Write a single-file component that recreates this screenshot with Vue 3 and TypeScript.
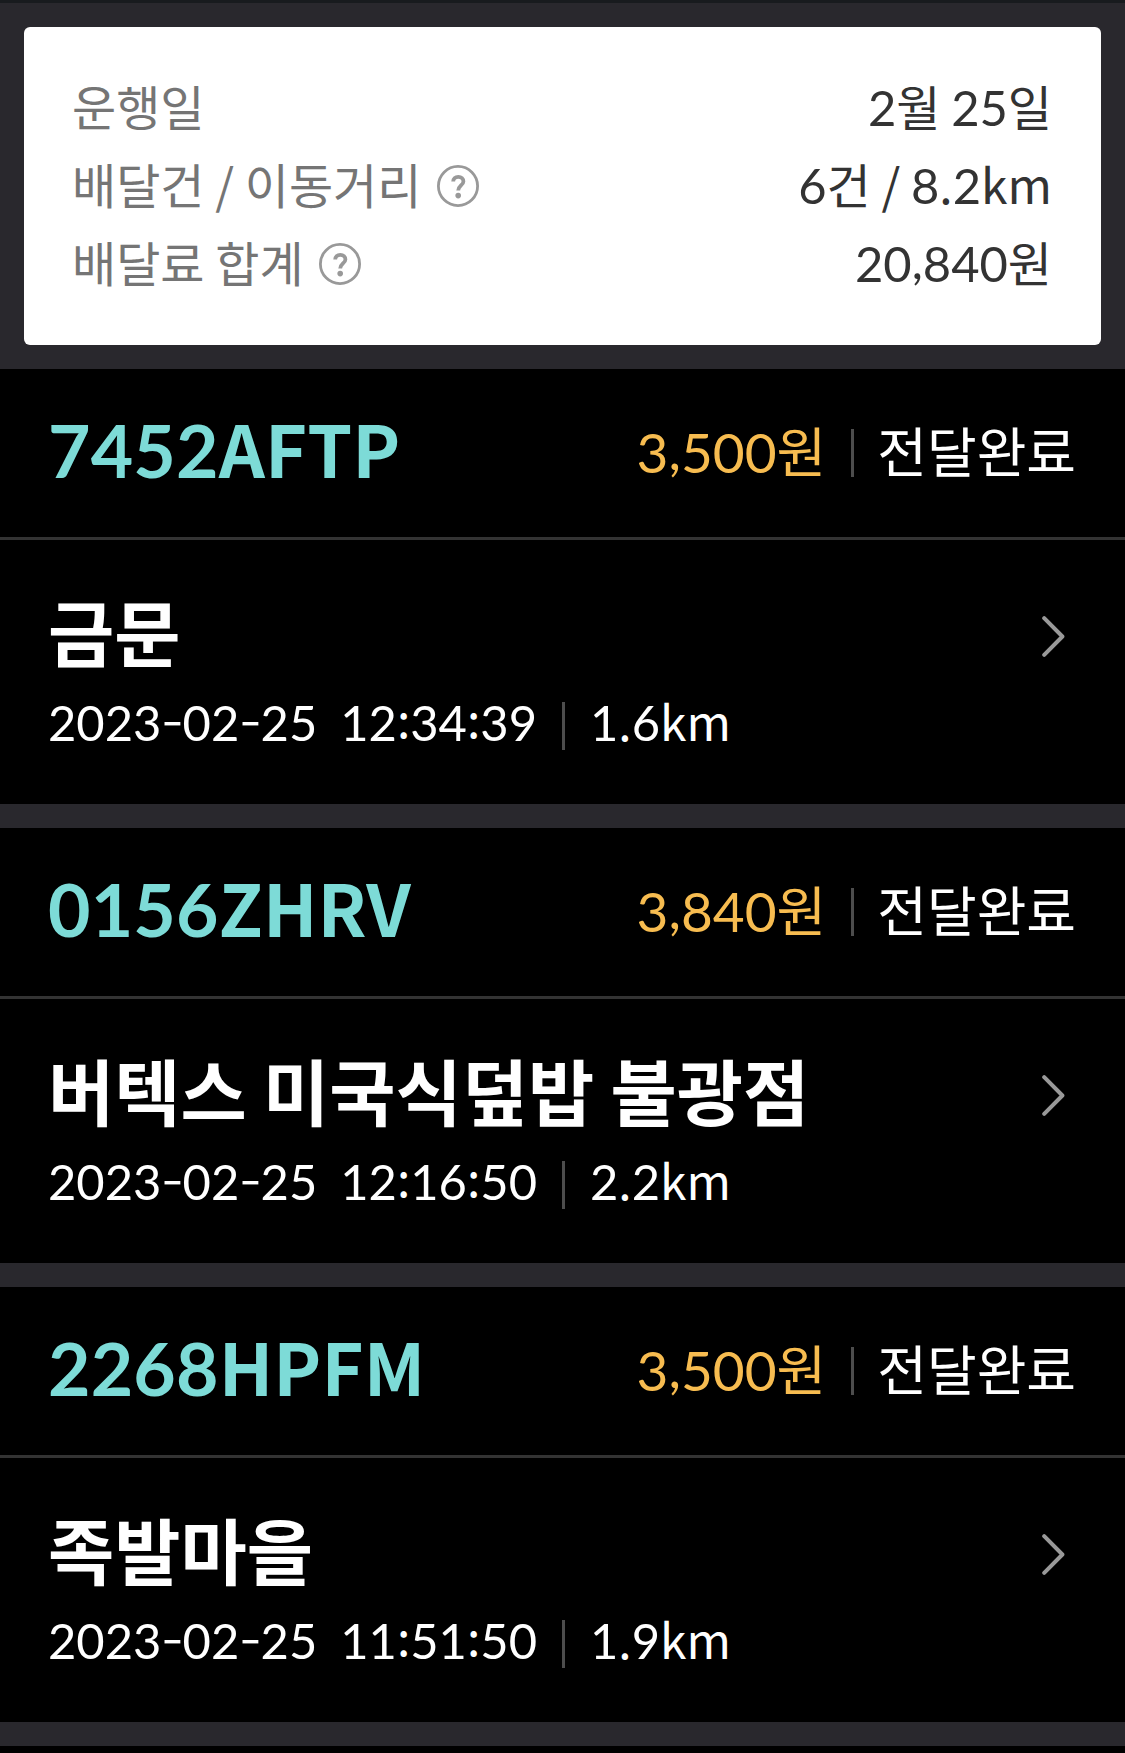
<script setup lang="ts">
import { h } from 'vue'

interface Delivery { code: string; fee: string; store: string; date: string; time: string; distance: string }

const summary = [
  { label: '운행일', value: '2월 25일', help: false },
  { label: '배달건 / 이동거리', value: '6건 / 8.2km', help: true },
  { label: '배달료 합계', value: '20,840원', help: true },
]
const deliveries: Delivery[] = [
  { code: '7452AFTP', fee: '3,500원', store: '금문', date: '2023-02-25', time: '12:34:39', distance: '1.6km' },
  { code: '0156ZHRV', fee: '3,840원', store: '버텍스 미국식덮밥 불광점', date: '2023-02-25', time: '12:16:50', distance: '2.2km' },
  { code: '2268HPFM', fee: '3,500원', store: '족발마을', date: '2023-02-25', time: '11:51:50', distance: '1.9km' },
]

// Numerals use their own face; dashes, colons and commas are raised to numeral height.
function runClass(run: string): string {
  if (/^\d/.test(run)) return 'num'
  if (run === ',') return 'num comma'
  if (run === '-') return 'dash'
  if (run === ':') return 'colon'
  return 'plain'
}
const Mixed = (props: { text: string }) =>
  h('span', (props.text.match(/\d+|,|-|:|[^\d,:-]+/g) ?? []).map((run) => h('span', { class: runClass(run) }, run)))
Mixed.props = ['text']
</script>

<template>
  <main class="screen">
    <section class="summary">
      <div class="card">
        <div v-for="row in summary" :key="row.label" class="row">
          <span class="label">{{ row.label }}</span>
          <svg v-if="row.help" class="help" viewBox="0 0 42 42" fill="none" stroke="#999">
            <circle cx="21" cy="21" r="19.6" stroke-width="2.8" />
            <path d="M16.2 16.6C16.2 13.6 18.2 11.8 21.3 11.8S26.4 13.6 26.4 16.4C26.4 20.2 21.2 20.8 21.2 25.4" stroke-width="3.8" />
            <circle cx="21.2" cy="30.6" r="2.8" fill="#999" stroke="none" />
          </svg>
          <Mixed class="value" :text="row.value" />
        </div>
      </div>
    </section>
    <article v-for="d in deliveries" :key="d.code" class="delivery">
      <header class="head">
        <h2 class="code"><Mixed :text="d.code" /></h2>
        <Mixed class="fee" :text="d.fee" />
        <i class="bar"></i>
        <span class="status">전달완료</span>
      </header>
      <div class="body">
        <div class="info">
          <h3 class="store">{{ d.store }}</h3>
          <div class="meta">
            <Mixed class="date" :text="d.date" />
            <Mixed :text="d.time" />
            <i class="bar"></i>
            <Mixed :text="d.distance" />
          </div>
        </div>
        <svg class="arrow" viewBox="0 0 23 41" fill="none" stroke="#999" stroke-width="4" stroke-linecap="round" stroke-linejoin="round"><path d="M2.2 2.2 20.4 20.5 2.2 38.8" /></svg>
      </div>
    </article>
  </main>
</template>

<style>
body { margin: 0; background: #000; }
</style>
<style scoped>
* { box-sizing: border-box; }
.screen { width: 1125px; height: 1753px; overflow: hidden; background: #000; color: #fff; font-family: "Noto Sans CJK KR", sans-serif; }
.screen :deep(.num) { font-family: Lato, sans-serif; font-size: 1.018em; line-height: 0; }
.screen :deep(.comma) { display: inline-block; line-height: 1; transform: translateY(-3px); }
.screen :deep(.plain) { white-space: pre; }
.screen :deep(.dash) { display: inline-block; margin: 0 2.3px; line-height: 1; transform: translateY(-4px) scaleX(1.28); }
.screen :deep(.colon) { display: inline-block; line-height: 1; transform: translateY(-3px); }
.summary { height: 369px; padding: 24px 24px 0; background: #29282d; border-top: 3px solid #181b1e; }
.card { height: 318px; padding: 39px 49px 0 48px; background: #fff; border-radius: 6px; }
.row { display: flex; align-items: center; height: 78px; font-size: 48px; line-height: 78px; white-space: nowrap; }
.label { color: #757575; }
.help { width: 42px; height: 42px; margin: 6px 0 0 15.5px; }
.value { margin-left: auto; color: #333; }
.delivery { height: 459px; border-bottom: 24px solid #29282d; }
.head { display: flex; align-items: center; height: 171px; padding: 0 49px 7px 48px; border-bottom: 3px solid #333; font-size: 54px; line-height: 80px; white-space: nowrap; }
h2, h3 { margin: 0; }
.code { margin: 0 auto 5px 0; color: #7ddbd7; font-size: 72px; line-height: 90px; font-weight: 700; letter-spacing: 0.15px; }
.fee { color: #f7bc50; }
.bar { flex: none; width: 3px; height: 48px; margin: 7px 23px 0 25px; background: #4d4d4d; }
.body { display: flex; align-items: flex-start; height: 264px; padding: 42px 60.5px 0 48px; }
.store { height: 95px; font-size: 72px; line-height: 96px; font-weight: 700; white-space: nowrap; }
.meta { display: flex; align-items: center; height: 86px; font-size: 48px; line-height: 86px; white-space: nowrap; }
.meta .bar { margin: 11px 25px 0 25px; }
.date { margin-right: 23px; }
.arrow { flex: none; width: 23px; height: 41px; margin: 33.5px 0 0 auto; }
</style>
